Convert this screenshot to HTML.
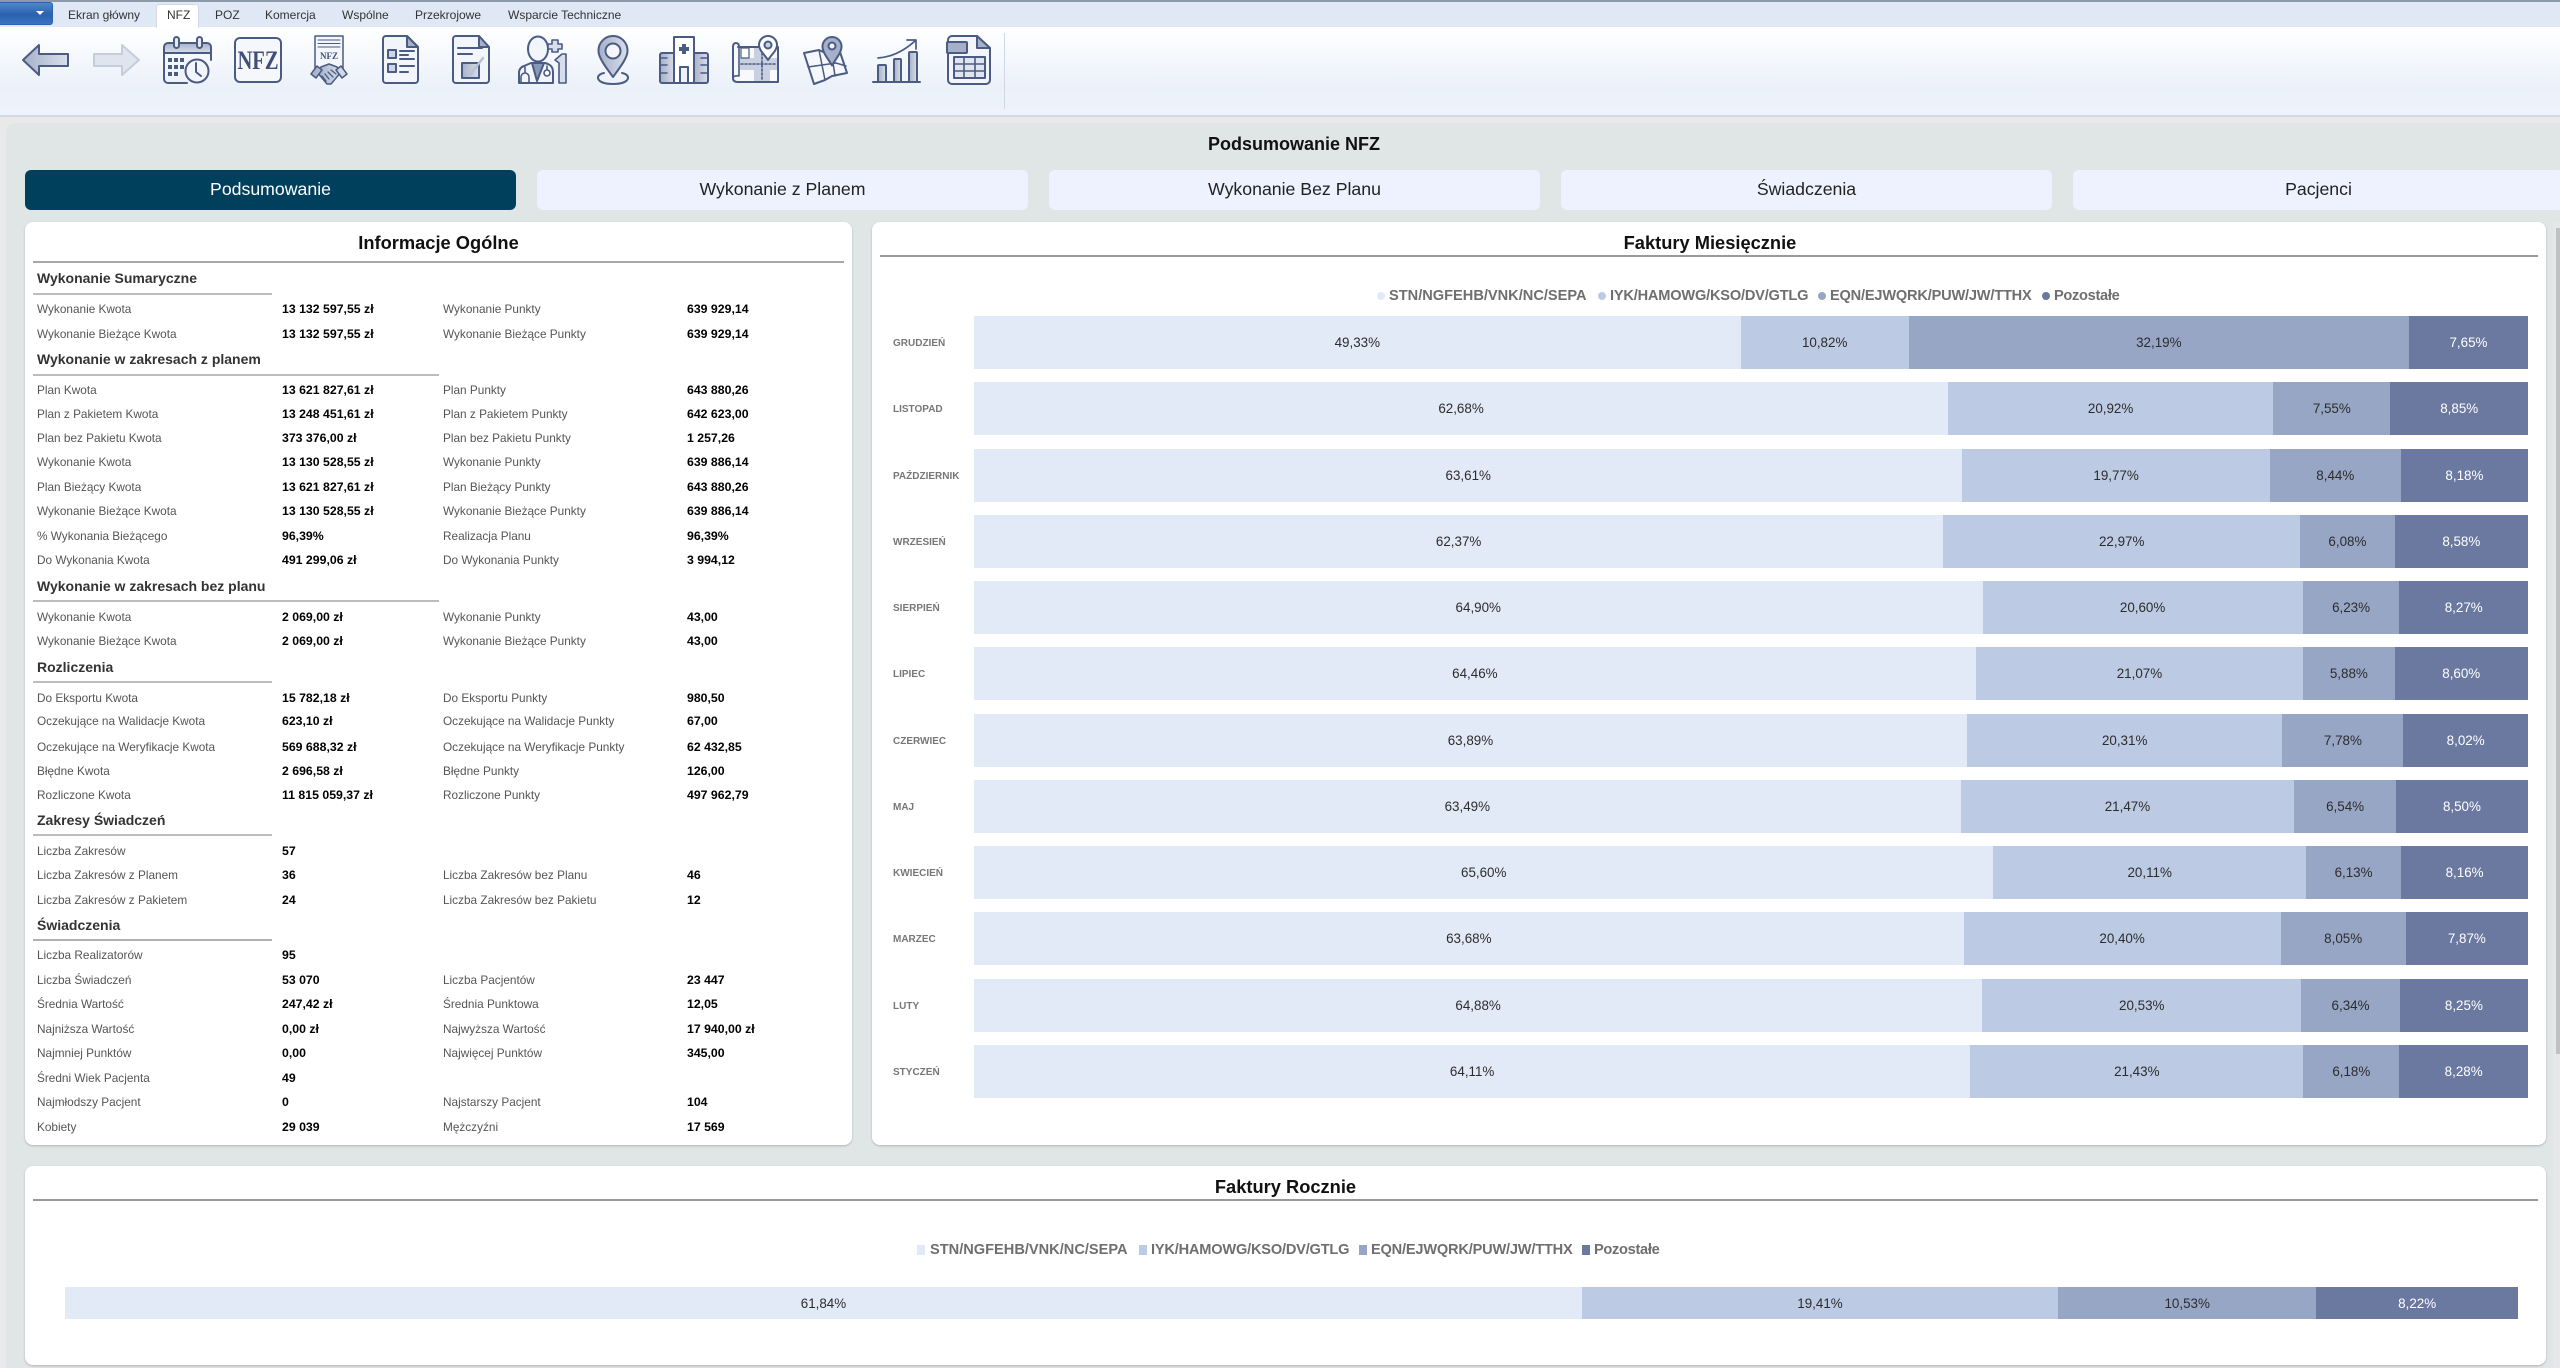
<!DOCTYPE html>
<html lang="pl"><head><meta charset="utf-8"><title>Podsumowanie NFZ</title>
<style>
html,body{margin:0;padding:0;width:2560px;height:1368px;overflow:hidden;background:#e9e9e9;font-family:"Liberation Sans",sans-serif;color:#222}
div,span{position:absolute;white-space:nowrap}
#strip{left:0;top:0;width:2560px;height:27px;background:#dfe8f4;border-top:2px solid #8a9aa9;box-sizing:border-box}
#file{left:-2px;top:2px;width:55px;height:23px;background:linear-gradient(#4f86cf,#2b61ad 55%,#3a73c2);border:1px solid #2a62b0;border-radius:3px;box-sizing:border-box}
#file i{position:absolute;left:37px;top:8px;width:0;height:0;border-left:4px solid transparent;border-right:4px solid transparent;border-top:4px solid #fff}
#nfz{left:156px;top:4px;width:43px;height:24px;background:#fff;border:1px solid #cfdbe8;border-bottom:0;border-radius:3px 3px 0 0;box-sizing:border-box}
.mt{top:7px;font-size:12px;line-height:16px;color:#333}
#ribbon{left:0;top:27px;width:2560px;height:90px;background:linear-gradient(#fff,#ebf1f9 70%,#eef3fb);border-bottom:2px solid #cfdbe6;box-sizing:border-box}
#sep{left:1004px;top:33px;width:1px;height:76px;background:#cfd9e6}
#main{left:6px;top:123px;width:2554px;height:1245px;background:#e0e6e6;border-radius:8px 0 0 0}
#pt{left:0;top:134px;width:2588px;text-align:center;font-size:18px;font-weight:bold;line-height:20px;color:#111}
.tab{top:170px;width:491px;height:40px;line-height:38px;text-align:center;background:#edf2fe;border-radius:6px;font-size:17.7px;color:#222}
.tab.on{background:#00405c;color:#fff}
.card{background:#fff;border-radius:8px;box-shadow:0 1px 2px rgba(0,0,0,.22)}
.tt{font-size:18.3px;font-weight:bold;line-height:22px;text-align:center;color:#111}
.rule{height:2px;background:#a8a8a8}
.h{left:37px;font-size:14px;font-weight:bold;line-height:18px;color:#333}
.u{left:33px;height:2px;background:#bdbdbd}
.r{left:0;width:850px;height:16px;font-size:11.8px;line-height:16px}
.r span{top:0;color:#555}
.r b{position:absolute;top:0;font-size:12.3px;color:#000}
.a{left:37px}.b{left:282px}.c{left:443px}.d{left:687px}
.bar{left:974px;width:1554px;height:53px;display:flex}
.bar2{left:65px;top:1287px;width:2453px;height:32px;display:flex}
.bar p,.bar2 p{margin:0;height:100%;text-align:center;font-size:13.4px;color:#2c2c2c;display:flex;align-items:center;justify-content:center}
.s1{background:#e3eaf7}.s2{background:#bccae3}.s3{background:#97a6c5}.s4{background:#6b79a1;color:#fff!important}
.m{left:893px;font-size:10px;font-weight:bold;line-height:14px;color:#777}
.lg{font-size:14.6px;font-weight:bold;line-height:18px;color:#6f6f6f}
.t{letter-spacing:-.2px}.p{letter-spacing:-.3px}
.dot{width:8px;height:8px;border-radius:50%}
.sq{width:8px;height:10px}
#track{left:2553px;top:222px;width:7px;height:1146px;background:#e6e8e8}
#thumb{left:2556px;top:228px;width:4px;height:826px;background:#bfc2c4}
svg{position:absolute;left:0;top:0}
</style></head><body>
<div id="strip"></div>
<div id="ribbon"></div>
<div id="file"><i></i></div>
<div id="nfz"></div>
<span class="mt" style="left:68px">Ekran główny</span>
<span class="mt" style="left:167px">NFZ</span>
<span class="mt" style="left:215px">POZ</span>
<span class="mt" style="left:265px">Komercja</span>
<span class="mt" style="left:342px">Wspólne</span>
<span class="mt" style="left:415px">Przekrojowe</span>
<span class="mt" style="left:508px">Wsparcie Techniczne</span>
<div id="sep"></div>

<svg width="1010" height="110" viewBox="0 0 1010 110" fill="none" stroke="#4a5b84" stroke-width="2" stroke-linejoin="round" stroke-linecap="round">
<defs><linearGradient id="g" x1="0" x2="1" y1="0" y2="0"><stop offset="0" stop-color="#a6b0c8"/><stop offset="1" stop-color="#d8deea"/></linearGradient>
<linearGradient id="v" x1="0" x2="0" y1="0" y2="1"><stop offset="0" stop-color="#a6b0c8"/><stop offset="1" stop-color="#d8deea"/></linearGradient></defs>
<!-- arrows -->
<path d="M23,60 L39,45 V54 H68 V66 H39 V75 Z" fill="url(#g)"/>
<path d="M94,54 H122 V45 L139,60 L122,75 V66 H94 Z" fill="#dfe4ee" stroke="#c5ccdb"/>
<!-- calendar -->
<path d="M164,53 V47 a4,4 0 0 1 4,-4 H207 a4,4 0 0 1 4,4 V53 Z" fill="url(#v)"/>
<path d="M164,53 V79 a4,4 0 0 0 4,4 H187 M211,53 V60"/>
<rect x="174" y="37" width="5" height="11" rx="2.5" fill="#e4e9f2"/><rect x="197" y="37" width="5" height="11" rx="2.5" fill="#e4e9f2"/>
<g fill="#4a5b84" stroke="none"><rect x="168" y="58" width="4" height="4"/><rect x="174" y="58" width="4" height="4"/><rect x="180" y="58" width="4" height="4"/><rect x="168" y="65" width="4" height="4"/><rect x="174" y="65" width="4" height="4"/><rect x="180" y="65" width="4" height="4"/><rect x="168" y="72" width="4" height="4"/><rect x="174" y="72" width="4" height="4"/></g>
<circle cx="197" cy="71" r="11.5" fill="#f2f5fa"/><path d="M196,63 V72 L201,76"/>
<!-- NFZ -->
<rect x="235" y="38" width="46" height="44" rx="5" fill="#f5f7fb"/>
<text x="258" y="69" text-anchor="middle" font-family="Liberation Serif,serif" font-weight="bold" font-size="26" fill="#3f4f78" stroke="none" textLength="41" lengthAdjust="spacingAndGlyphs">NFZ</text>
<!-- handshake doc -->
<rect x="315" y="36" width="28" height="34" fill="#f3f6fb" stroke-width="1.5"/>
<path d="M318,40 H340 M318,43.5 H340 M318,47 H340" stroke-width="1"/>
<text x="329" y="59" text-anchor="middle" font-family="Liberation Serif,serif" font-weight="bold" font-size="9" fill="#3f4f78" stroke="none">NFZ</text>
<path d="M321,67 L329,64 L337,67 L341,72 L331,84 L327,84 L317,72 Z" fill="url(#g)" stroke-width="1.5"/>
<path d="M325,74 L329,79 M328,72 L333,77 M331,70 L336,74 M322,76 L326,81" stroke-width="1.3"/>
<path d="M311,74 L317,66 L322,70 L316,78 Z M347,74 L341,66 L336,70 L342,78 Z" fill="url(#g)" stroke-width="1.5"/>
<!-- doc list -->
<path d="M386,36 H407 L418,47 V80 a3,3 0 0 1 -3,3 H386 a3,3 0 0 1 -3,-3 V39 a3,3 0 0 1 3,-3 Z" fill="#f2f5fa"/>
<path d="M407,36 V47 H418 Z" fill="#a6b0c8"/>
<rect x="388" y="50" width="8" height="8" fill="#ced5e3"/><rect x="388" y="64" width="8" height="8" fill="#ced5e3"/>
<path d="M400,51 H414 M400,55 H408 M400,59 H414 M400,66 H414 M400,72 H408"/>
<!-- doc check -->
<path d="M456,36 H479 L489,47 V80 a3,3 0 0 1 -3,3 H456 a3,3 0 0 1 -3,-3 V39 a3,3 0 0 1 3,-3 Z" fill="#f2f5fa"/>
<path d="M479,36 V47 H489 Z" fill="#a6b0c8"/>
<path d="M458,48 H482 M458,54 H472"/>
<rect x="462" y="63" width="17" height="15" fill="url(#g)"/>
<path d="M466,70 L470,75 L483,58" stroke="#b9c1d3" stroke-width="2.5"/>
<!-- doctor -->
<path d="M519,83 V73 a7,7 0 0 1 5,-7 L531,63 H545 L548,64 Q553,66 553,72 V83 Z" fill="#f2f5fa"/>
<ellipse cx="538" cy="49" rx="10" ry="12.5" fill="#f2f5fa"/>
<path d="M532,63 L537,81 L544,63 Z" fill="#8a97b6"/>
<path d="M525,67 V73 M521,83 V77 a4,4 0 0 1 8,0 V83 M547,66 V70" stroke-width="1.6"/>
<circle cx="547" cy="73" r="3" fill="#fff" stroke-width="1.6"/>
<path d="M552,40 H558 V44 H562 V49 H558 V52 H552 V49 H548 V44 H552 Z" fill="#d7dde9" stroke-width="1.6"/>
<path d="M555,60 L562,54 H566 V83 H559 V63 Z" fill="#d7dde9" stroke-width="1.6"/>
<!-- pin -->
<path d="M613,36 a14.5,14.5 0 0 1 14.5,15 c0,7 -8,17 -14.5,26 c-6.5,-9 -14.5,-19 -14.5,-26 a14.5,14.5 0 0 1 14.5,-15 Z" fill="url(#g)"/>
<circle cx="613" cy="51" r="7.5" fill="#f4f6fb"/>
<path d="M604,73 C594,75 596,84 613,84 C630,84 632,75 622,73"/>
<!-- hospital -->
<rect x="660" y="53" width="15" height="30" rx="2" fill="url(#g)"/>
<rect x="693" y="53" width="15" height="30" rx="2" fill="url(#g)"/>
<rect x="674" y="37" width="20" height="46" fill="#fff"/>
<path d="M682,44 h4 v3 h3 v4 h-3 v3 h-4 v-3 h-3 v-4 h3 Z" fill="#4a5b84" stroke="none"/>
<rect x="680" y="67" width="8" height="16" fill="#eef1f7"/>
<path d="M661,58 H667 M661,65 H667 M661,73 H667 M701,58 H707 M701,65 H707 M701,73 H707" stroke-width="1.6"/>
<!-- blueprint -->
<path d="M738,47 H778 V82 H738 Q733,82 733,78 V47 Q733,43 736,43 Q739,43 739,47 Z" fill="#f7f9fc"/>
<rect x="754" y="48" width="16" height="33" fill="#c9d0df" stroke="none"/>
<rect x="740" y="58" width="37" height="12" fill="#c9d0df" stroke="none"/>
<rect x="741" y="48" width="8" height="10" fill="#fff" stroke-width="1.2"/>
<path d="M739,47 V76 Q733,75 733,79 Q733,82 738,82" stroke-width="1.6"/>
<path d="M741,64 H777 M762,49 V81" stroke-dasharray="2 2" stroke-width="1.6"/>
<path d="M768,36 a9,9 0 0 1 9,9 c0,5 -5,9 -9,15 c-4,-6 -9,-10 -9,-15 a9,9 0 0 1 9,-9 Z" fill="#fff"/>
<circle cx="768" cy="45" r="3.5" fill="#c9d0df"/>
<!-- map -->
<path d="M804,53 L819,50 L832,56 L840,52 L847,73 L832,76 L825,80 L814,84 Z" fill="#f5f7fb"/>
<path d="M819,50 L825,80 M832,56 L835,76 M808,67 L836,63 L846,66" stroke-width="1.5"/>
<path d="M832,37 a9.5,9.5 0 0 1 9.5,9.5 c0,6 -5.5,12 -9.5,19 c-4,-7 -9.5,-13 -9.5,-19 a9.5,9.5 0 0 1 9.5,-9.5 Z" fill="#a6b0c8"/>
<circle cx="832" cy="46" r="3.5" fill="#f0f3f9"/>
<!-- chart -->
<path d="M873,82 H920"/>
<rect x="878" y="65" width="8" height="17" rx="1" fill="url(#g)"/><rect x="894" y="59" width="7" height="23" rx="1" fill="url(#g)"/><rect x="909" y="52" width="8" height="30" rx="1" fill="url(#g)"/>
<path d="M878,58 C893,57 905,50 915,41 M907,40 H916 V49" stroke-width="1.7"/>
<!-- sheet -->
<path d="M952,36 H977 L990,48 V80 a4,4 0 0 1 -4,4 H952 a4,4 0 0 1 -4,-4 V40 a4,4 0 0 1 4,-4 Z" fill="#f2f5fa"/>
<path d="M977,36 V48 H990 Z" fill="#a6b0c8"/>
<rect x="947" y="42" width="20" height="11" rx="1" fill="#a6b0c8"/>
<rect x="954" y="57" width="31" height="21" fill="#dfe4ee"/>
<path d="M954,64 H985 M954,71 H985 M964,57 V78 M975,57 V78" stroke-width="1.6"/>
</svg>

<div id="main"></div>
<div id="pt">Podsumowanie NFZ</div>
<div class="tab on" style="left:25px">Podsumowanie</div>
<div class="tab" style="left:537px">Wykonanie z Planem</div>
<div class="tab" style="left:1049px">Wykonanie Bez Planu</div>
<div class="tab" style="left:1561px">Świadczenia</div>
<div class="tab" style="left:2073px">Pacjenci</div>

<div id="track"></div><div id="thumb"></div>

<!-- left card -->
<div class="card" style="left:25px;top:222px;width:827px;height:923px"></div>
<div class="tt" style="left:25px;top:232px;width:827px">Informacje Ogólne</div>
<div class="rule" style="left:33px;top:261px;width:811px"></div>

<div class="h" style="top:269px">Wykonanie Sumaryczne</div><div class="u" style="top:293px;width:239px"></div>
<div class="r" style="top:301px"><span class="a">Wykonanie Kwota</span><b class="b">13 132 597,55 zł</b><span class="c">Wykonanie Punkty</span><b class="d">639 929,14</b></div>
<div class="r" style="top:326px"><span class="a">Wykonanie Bieżące Kwota</span><b class="b">13 132 597,55 zł</b><span class="c">Wykonanie Bieżące Punkty</span><b class="d">639 929,14</b></div>

<div class="h" style="top:350px">Wykonanie w zakresach z planem</div><div class="u" style="top:374px;width:406px"></div>
<div class="r" style="top:382px"><span class="a">Plan Kwota</span><b class="b">13 621 827,61 zł</b><span class="c">Plan Punkty</span><b class="d">643 880,26</b></div>
<div class="r" style="top:406px"><span class="a">Plan z Pakietem Kwota</span><b class="b">13 248 451,61 zł</b><span class="c">Plan z Pakietem Punkty</span><b class="d">642 623,00</b></div>
<div class="r" style="top:430px"><span class="a">Plan bez Pakietu Kwota</span><b class="b">373 376,00 zł</b><span class="c">Plan bez Pakietu Punkty</span><b class="d">1 257,26</b></div>
<div class="r" style="top:454px"><span class="a">Wykonanie Kwota</span><b class="b">13 130 528,55 zł</b><span class="c">Wykonanie Punkty</span><b class="d">639 886,14</b></div>
<div class="r" style="top:479px"><span class="a">Plan Bieżący Kwota</span><b class="b">13 621 827,61 zł</b><span class="c">Plan Bieżący Punkty</span><b class="d">643 880,26</b></div>
<div class="r" style="top:503px"><span class="a">Wykonanie Bieżące Kwota</span><b class="b">13 130 528,55 zł</b><span class="c">Wykonanie Bieżące Punkty</span><b class="d">639 886,14</b></div>
<div class="r" style="top:528px"><span class="a">% Wykonania Bieżącego</span><b class="b">96,39%</b><span class="c">Realizacja Planu</span><b class="d">96,39%</b></div>
<div class="r" style="top:552px"><span class="a">Do Wykonania Kwota</span><b class="b">491 299,06 zł</b><span class="c">Do Wykonania Punkty</span><b class="d">3 994,12</b></div>

<div class="h" style="top:577px">Wykonanie w zakresach bez planu</div><div class="u" style="top:600px;width:406px"></div>
<div class="r" style="top:609px"><span class="a">Wykonanie Kwota</span><b class="b">2 069,00 zł</b><span class="c">Wykonanie Punkty</span><b class="d">43,00</b></div>
<div class="r" style="top:633px"><span class="a">Wykonanie Bieżące Kwota</span><b class="b">2 069,00 zł</b><span class="c">Wykonanie Bieżące Punkty</span><b class="d">43,00</b></div>

<div class="h" style="top:658px">Rozliczenia</div><div class="u" style="top:681px;width:239px"></div>
<div class="r" style="top:690px"><span class="a">Do Eksportu Kwota</span><b class="b">15 782,18 zł</b><span class="c">Do Eksportu Punkty</span><b class="d">980,50</b></div>
<div class="r" style="top:713px"><span class="a">Oczekujące na Walidacje Kwota</span><b class="b">623,10 zł</b><span class="c">Oczekujące na Walidacje Punkty</span><b class="d">67,00</b></div>
<div class="r" style="top:739px"><span class="a">Oczekujące na Weryfikacje Kwota</span><b class="b">569 688,32 zł</b><span class="c">Oczekujące na Weryfikacje Punkty</span><b class="d">62 432,85</b></div>
<div class="r" style="top:763px"><span class="a">Błędne Kwota</span><b class="b">2 696,58 zł</b><span class="c">Błędne Punkty</span><b class="d">126,00</b></div>
<div class="r" style="top:787px"><span class="a">Rozliczone Kwota</span><b class="b">11 815 059,37 zł</b><span class="c">Rozliczone Punkty</span><b class="d">497 962,79</b></div>

<div class="h" style="top:811px">Zakresy Świadczeń</div><div class="u" style="top:834px;width:239px"></div>
<div class="r" style="top:843px"><span class="a">Liczba Zakresów</span><b class="b">57</b></div>
<div class="r" style="top:867px"><span class="a">Liczba Zakresów z Planem</span><b class="b">36</b><span class="c">Liczba Zakresów bez Planu</span><b class="d">46</b></div>
<div class="r" style="top:892px"><span class="a">Liczba Zakresów z Pakietem</span><b class="b">24</b><span class="c">Liczba Zakresów bez Pakietu</span><b class="d">12</b></div>

<div class="h" style="top:916px">Świadczenia</div><div class="u" style="top:939px;width:239px;background:#b0b0b0"></div>
<div class="r" style="top:947px"><span class="a">Liczba Realizatorów</span><b class="b">95</b></div>
<div class="r" style="top:972px"><span class="a">Liczba Świadczeń</span><b class="b">53 070</b><span class="c">Liczba Pacjentów</span><b class="d">23 447</b></div>
<div class="r" style="top:996px"><span class="a">Średnia Wartość</span><b class="b">247,42 zł</b><span class="c">Średnia Punktowa</span><b class="d">12,05</b></div>
<div class="r" style="top:1021px"><span class="a">Najniższa Wartość</span><b class="b">0,00 zł</b><span class="c">Najwyższa Wartość</span><b class="d">17 940,00 zł</b></div>
<div class="r" style="top:1045px"><span class="a">Najmniej Punktów</span><b class="b">0,00</b><span class="c">Najwięcej Punktów</span><b class="d">345,00</b></div>
<div class="r" style="top:1070px"><span class="a">Średni Wiek Pacjenta</span><b class="b">49</b></div>
<div class="r" style="top:1094px"><span class="a">Najmłodszy Pacjent</span><b class="b">0</b><span class="c">Najstarszy Pacjent</span><b class="d">104</b></div>
<div class="r" style="top:1119px"><span class="a">Kobiety</span><b class="b">29 039</b><span class="c">Mężczyźni</span><b class="d">17 569</b></div>

<!-- right card -->
<div class="card" style="left:872px;top:222px;width:1674px;height:923px"></div>
<div class="tt" style="left:872px;top:232px;width:1676px">Faktury Miesięcznie</div>
<div class="rule" style="left:880px;top:255px;width:1658px;background:#999"></div>

<div class="dot s1" style="left:1377px;top:292px"></div><span class="lg" style="left:1389px;top:287px">STN/NGFEHB/VNK/NC/SEPA</span>
<div class="dot s2" style="left:1598px;top:292px"></div><span class="lg t" style="left:1610px;top:287px">IYK/HAMOWG/KSO/DV/GTLG</span>
<div class="dot s3" style="left:1818px;top:292px"></div><span class="lg t" style="left:1830px;top:287px">EQN/EJWQRK/PUW/JW/TTHX</span>
<div class="dot s4" style="left:2042px;top:292px"></div><span class="lg p" style="left:2054px;top:287px">Pozostałe</span>

<span class="m" style="top:337px">GRUDZIEŃ</span>
<div class="bar" style="top:316px"><p class="s1" style="width:49.33%">49,33%</p><p class="s2" style="width:10.82%">10,82%</p><p class="s3" style="width:32.19%">32,19%</p><p class="s4" style="width:7.66%">7,65%</p></div>
<span class="m" style="top:403px">LISTOPAD</span>
<div class="bar" style="top:382px"><p class="s1" style="width:62.68%">62,68%</p><p class="s2" style="width:20.92%">20,92%</p><p class="s3" style="width:7.55%">7,55%</p><p class="s4" style="width:8.85%">8,85%</p></div>
<span class="m" style="top:470px">PAŹDZIERNIK</span>
<div class="bar" style="top:449px"><p class="s1" style="width:63.61%">63,61%</p><p class="s2" style="width:19.77%">19,77%</p><p class="s3" style="width:8.44%">8,44%</p><p class="s4" style="width:8.18%">8,18%</p></div>
<span class="m" style="top:536px">WRZESIEŃ</span>
<div class="bar" style="top:515px"><p class="s1" style="width:62.37%">62,37%</p><p class="s2" style="width:22.97%">22,97%</p><p class="s3" style="width:6.08%">6,08%</p><p class="s4" style="width:8.58%">8,58%</p></div>
<span class="m" style="top:602px">SIERPIEŃ</span>
<div class="bar" style="top:581px"><p class="s1" style="width:64.90%">64,90%</p><p class="s2" style="width:20.60%">20,60%</p><p class="s3" style="width:6.23%">6,23%</p><p class="s4" style="width:8.27%">8,27%</p></div>
<span class="m" style="top:668px">LIPIEC</span>
<div class="bar" style="top:647px"><p class="s1" style="width:64.46%">64,46%</p><p class="s2" style="width:21.07%">21,07%</p><p class="s3" style="width:5.88%">5,88%</p><p class="s4" style="width:8.59%">8,60%</p></div>
<span class="m" style="top:735px">CZERWIEC</span>
<div class="bar" style="top:714px"><p class="s1" style="width:63.89%">63,89%</p><p class="s2" style="width:20.31%">20,31%</p><p class="s3" style="width:7.78%">7,78%</p><p class="s4" style="width:8.02%">8,02%</p></div>
<span class="m" style="top:801px">MAJ</span>
<div class="bar" style="top:780px"><p class="s1" style="width:63.49%">63,49%</p><p class="s2" style="width:21.47%">21,47%</p><p class="s3" style="width:6.54%">6,54%</p><p class="s4" style="width:8.50%">8,50%</p></div>
<span class="m" style="top:867px">KWIECIEŃ</span>
<div class="bar" style="top:846px"><p class="s1" style="width:65.60%">65,60%</p><p class="s2" style="width:20.11%">20,11%</p><p class="s3" style="width:6.13%">6,13%</p><p class="s4" style="width:8.16%">8,16%</p></div>
<span class="m" style="top:933px">MARZEC</span>
<div class="bar" style="top:912px"><p class="s1" style="width:63.68%">63,68%</p><p class="s2" style="width:20.40%">20,40%</p><p class="s3" style="width:8.05%">8,05%</p><p class="s4" style="width:7.87%">7,87%</p></div>
<span class="m" style="top:1000px">LUTY</span>
<div class="bar" style="top:979px"><p class="s1" style="width:64.88%">64,88%</p><p class="s2" style="width:20.53%">20,53%</p><p class="s3" style="width:6.34%">6,34%</p><p class="s4" style="width:8.25%">8,25%</p></div>
<span class="m" style="top:1066px">STYCZEŃ</span>
<div class="bar" style="top:1045px"><p class="s1" style="width:64.11%">64,11%</p><p class="s2" style="width:21.43%">21,43%</p><p class="s3" style="width:6.18%">6,18%</p><p class="s4" style="width:8.28%">8,28%</p></div>

<!-- bottom card -->
<div class="card" style="left:25px;top:1166px;width:2521px;height:199px"></div>
<div class="tt" style="left:25px;top:1176px;width:2521px">Faktury Rocznie</div>
<div class="rule" style="left:33px;top:1199px;width:2505px;background:#999"></div>

<div class="sq s1" style="left:917px;top:1245px"></div><span class="lg" style="left:930px;top:1241px">STN/NGFEHB/VNK/NC/SEPA</span>
<div class="sq s2" style="left:1139px;top:1245px"></div><span class="lg t" style="left:1151px;top:1241px">IYK/HAMOWG/KSO/DV/GTLG</span>
<div class="sq s3" style="left:1359px;top:1245px"></div><span class="lg t" style="left:1371px;top:1241px">EQN/EJWQRK/PUW/JW/TTHX</span>
<div class="sq s4" style="left:1582px;top:1245px"></div><span class="lg p" style="left:1594px;top:1241px">Pozostałe</span>

<div class="bar2"><p class="s1" style="width:61.84%">61,84%</p><p class="s2" style="width:19.41%">19,41%</p><p class="s3" style="width:10.53%">10,53%</p><p class="s4" style="width:8.22%">8,22%</p></div>
</body></html>
